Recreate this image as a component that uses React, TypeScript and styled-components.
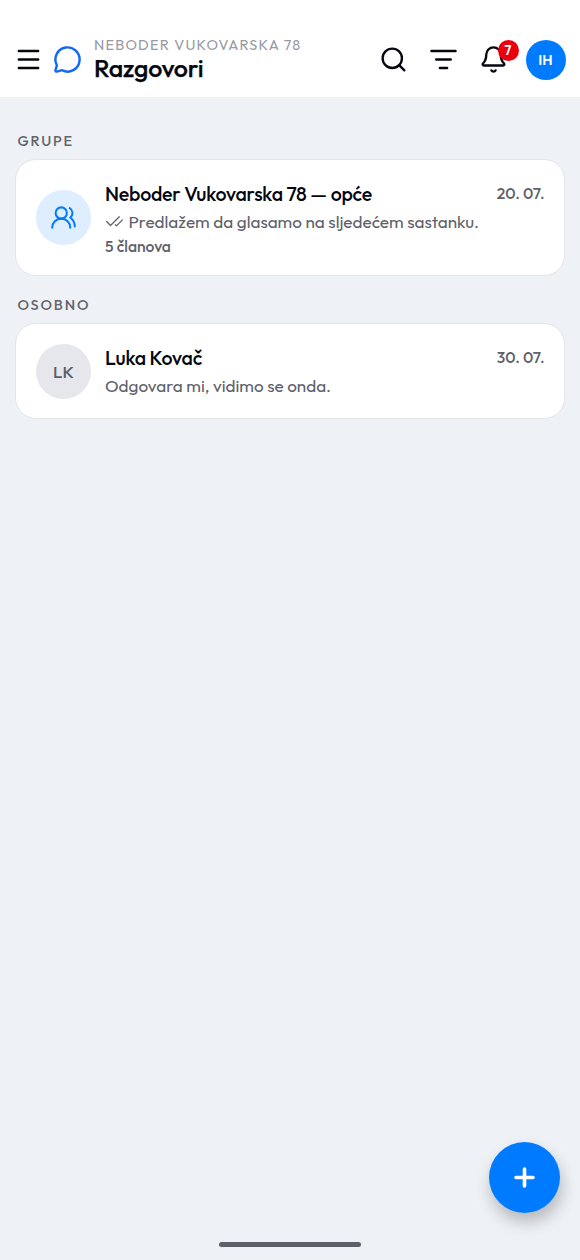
import React from 'react';
import styled, { createGlobalStyle } from 'styled-components';
import { Bell, CheckCheck, ListFilter, Menu, MessageCircle, Plus, Search, UsersRound } from 'lucide-react';

const GlobalStyle = createGlobalStyle`
  *, *::before, *::after { box-sizing: border-box; }
  body {
    margin: 0;
    background: #eef1f6;
    color: #05060f;
    font-family: Outfit, Lato, sans-serif;
  }
  button { font-family: inherit; }
`;

const Screen = styled.div`
  min-height: 1260px;
  display: flex;
  flex-direction: column;
`;

const Header = styled.header`
  height: 97px;
  padding: 22px 14.5px 0 14px;
  display: flex;
  align-items: center;
  background: #fff;
`;

const IconButton = styled.button<{ $gap?: number }>`
  position: relative;
  display: flex;
  padding: 0;
  margin: 0 ${(p) => p.$gap ?? 0}px 0 0;
  border: 0;
  background: none;
  color: inherit;
`;

const ChatMark = styled.span`
  display: flex;
  margin-right: 12px;
  color: #1766f6;
`;

const Titles = styled.div`
  flex: 1;
`;

const Overline = styled.div`
  font-size: 14.5px;
  line-height: 18px;
  letter-spacing: 1.18px;
  color: #989aa3;
  white-space: nowrap;
`;

const Title = styled.h1`
  margin: 0;
  font-size: 25px;
  line-height: 29px;
  font-weight: 500;
  letter-spacing: -0.2px;
  -webkit-text-stroke: 0.25px currentColor;
`;

const Badge = styled.span`
  position: absolute;
  top: -5px;
  right: -11px;
  width: 21px;
  height: 21px;
  border-radius: 50%;
  background: #e8000d;
  color: #fff;
  font-size: 13px;
  line-height: 21px;
  font-weight: 600;
  text-align: center;
`;

const Profile = styled.div`
  width: 40px;
  height: 40px;
  border-radius: 50%;
  display: grid;
  place-items: center;
  background: #007bff;
  color: #fff;
  font-size: 14.3px;
  font-weight: 600;
`;

const List = styled.main`
  flex: 1;
  padding: 35px 15px 0;
`;

const SectionLabel = styled.h2`
  margin: 0 0 9.4px;
  padding-left: 2.5px;
  font-size: 14.5px;
  line-height: 18px;
  font-weight: 500;
  letter-spacing: 1.82px;
  color: #63656c;
`;

const Card = styled.article<{ $height: number }>`
  height: ${(p) => p.$height}px;
  margin-bottom: 19.2px;
  padding: 0 19.5px 0 20px;
  display: flex;
  align-items: center;
  gap: 14px;
  background: #fff;
  border: 1px solid #e3e5eb;
  border-radius: 21px;
`;

const Avatar = styled.div<{ $tone: 'group' | 'person' }>`
  flex: none;
  width: 55px;
  height: 55px;
  border-radius: 50%;
  display: grid;
  place-items: center;
  background: ${(p) => (p.$tone === 'group' ? '#dfeeff' : '#e6e7ed')};
  color: ${(p) => (p.$tone === 'group' ? '#007bff' : '#5b5d64')};
  font-size: 17px;
  font-weight: 500;
`;

const Body = styled.div<{ $offset?: number }>`
  flex: 1;
  min-width: 0;
  padding-top: ${(p) => p.$offset ?? 0}px;
`;

const TopLine = styled.div`
  display: flex;
  justify-content: space-between;
  align-items: center;
  line-height: 28px;
`;

const Name = styled.span`
  font-size: 19.6px;
  font-weight: 500;
  letter-spacing: -0.23px;
`;

const DateText = styled.time`
  font-size: 15.75px;
  line-height: 27px;
  font-weight: 500;
  color: #5e616b;
`;

const Message = styled.p`
  margin: 0;
  display: flex;
  align-items: center;
  gap: 4.5px;
  font-size: 17.1px;
  line-height: 27px;
  color: #5e616b;
  white-space: nowrap;
`;

const Members = styled.p`
  margin: 0;
  font-size: 15.65px;
  line-height: 22px;
  font-weight: 500;
  color: #5e616b;
`;

const Fab = styled.button`
  position: fixed;
  right: 20px;
  bottom: 47px;
  width: 71px;
  height: 71px;
  padding: 0;
  border: 0;
  border-radius: 50%;
  display: grid;
  place-items: center;
  background: #007bff;
  color: #fff;
  box-shadow: 2px 9px 16px rgba(0, 0, 0, 0.24);
`;

const HomeBar = styled.div`
  width: 142px;
  height: 5.5px;
  margin: 0 auto 13px;
  border-radius: 3px;
  background: #5d6068;
`;

export default function App() {
  return (
    <Screen>
      <GlobalStyle />
      <Header>
        <IconButton $gap={10} aria-label="Izbornik"><Menu size={29} strokeWidth={1.95} /></IconButton>
        <ChatMark><MessageCircle size={29} strokeWidth={2} /></ChatMark>
        <Titles>
          <Overline>NEBODER VUKOVARSKA 78</Overline>
          <Title>Razgovori</Title>
        </Titles>
        <IconButton $gap={21.5} aria-label="Traži"><Search size={29} strokeWidth={1.95} /></IconButton>
        <IconButton $gap={20.5} aria-label="Filtriraj"><ListFilter size={29} strokeWidth={1.95} /></IconButton>
        <IconButton $gap={18} aria-label="Obavijesti">
          <Bell size={29} strokeWidth={1.95} />
          <Badge>7</Badge>
        </IconButton>
        <Profile>IH</Profile>
      </Header>
      <List>
        <SectionLabel>GRUPE</SectionLabel>
        <Card $height={117}>
          <Avatar $tone="group"><UsersRound size={27} strokeWidth={1.8} /></Avatar>
          <Body $offset={1}>
            <TopLine>
              <Name>Neboder Vukovarska 78 — opće</Name>
              <DateText>20. 07.</DateText>
            </TopLine>
            <Message>
              <CheckCheck size={19} strokeWidth={1.6} />
              Predlažem da glasamo na sljedećem sastanku.
            </Message>
            <Members>5 članova</Members>
          </Body>
        </Card>
        <SectionLabel>OSOBNO</SectionLabel>
        <Card $height={96.5}>
          <Avatar $tone="person">LK</Avatar>
          <Body>
            <TopLine>
              <Name>Luka Kovač</Name>
              <DateText>30. 07.</DateText>
            </TopLine>
            <Message>Odgovara mi, vidimo se onda.</Message>
          </Body>
        </Card>
      </List>
      <HomeBar />
      <Fab aria-label="Novi razgovor"><Plus size={29} strokeWidth={3} /></Fab>
    </Screen>
  );
}
